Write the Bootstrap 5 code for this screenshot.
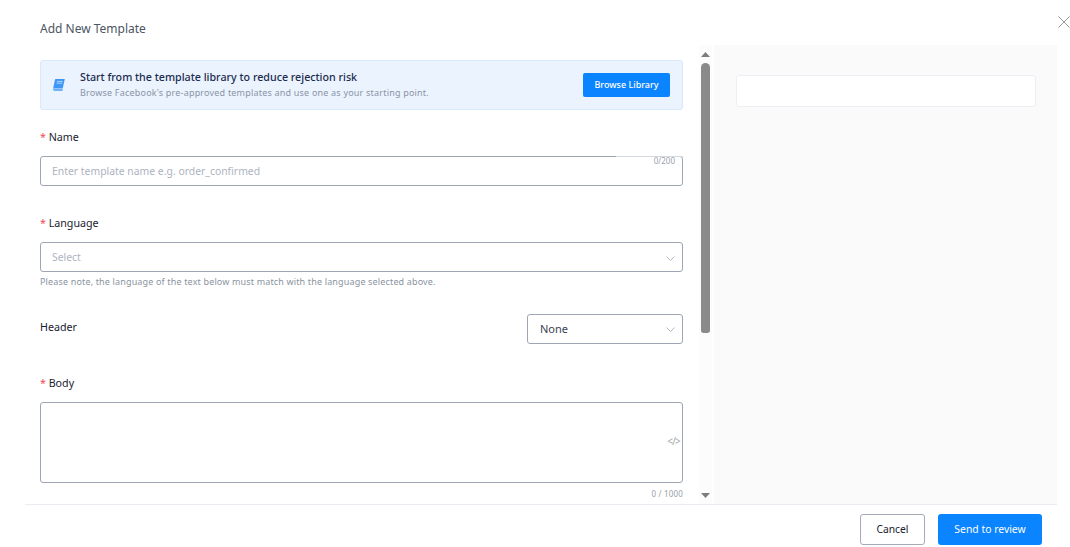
<!DOCTYPE html>
<html lang="en">
<head>
    <meta charset="UTF-8">
    <meta name="viewport" content="width=device-width, initial-scale=1.0">
    <title>Add New Template</title>
    <link href="https://cdn.jsdelivr.net/npm/bootstrap@5.3.0/dist/css/bootstrap.min.css" rel="stylesheet">
    <style>
        html, body { height: 100%; overflow: hidden; }
        body { font-family: "Noto Sans", "Open Sans", sans-serif; font-size: 12px; color: #1a2230; background: #fff; }
        .page { height: 547px; width: 1070px; padding-left: 25px; }
        .title-bar { height: 45px; width: 1032px; padding: 20px 0 0 15px; font-size: 12px; line-height: 18px; color: #4b5563; position: relative; }
        .close-x { position: absolute; left: 1033px; top: 16px; width: 12px; height: 12px; }
        .content { height: 459px; width: 1032px; }
        .left-pane { width: 687px; flex: none; padding: 15px 0 0 15px; }
        .form-col { width: 643px; flex: none; }
        .scroll { width: 13px; flex: none; margin-left: 16px; background: #fcfcfc; }
        .scroll-arrow { height: 18px; }
        .thumb { width: 9px; height: 270px; background: #8a8a8a; border-radius: 5px 5px 3px 3px; margin: 0 auto; }
        .right-pane { width: 343px; flex: none; margin-left: 2px; background: #fafafa; padding: 30px 21px 0 22px; }
        .preview-box { height: 32px; background: #fff; border: 1px solid #eeeff5; border-radius: 3px; }
        .tip { height: 50px; background: #eaf3fe; border: 1px solid #d8e9fd; border-radius: 3px; padding: 0 12px 0 11px; }
        .tip-text { margin-left: 14px; }
        .tip-title { font-size: 10.7px; line-height: 15px; font-weight: 500; color: #1b2b4d; }
        .tip-sub { font-size: 9px; line-height: 14px; margin-top: 1px; color: #8a94a6; letter-spacing: .2px; }
        .btn-browse { background: #0a84ff; color: #fff; font-size: 9px; font-weight: 500; height: 24px; width: 87px; padding: 0; border: 0; border-radius: 2px; }
        .field-label { font-size: 10.7px; line-height: 16px; color: #1a2230; margin: 0; }
        .req { color: #ef4a55; }
        .field { height: 30px; border: 1px solid #9ea6b4; border-radius: 3px; padding: 2px 7px 0 11px; font-size: 10.4px; color: #adb3bf; background: #fff; }
        .field-value { color: #3a4250; font-size: 11px; padding: 0 7px 0 12px; }
        .notch { position: absolute; right: -1px; top: -1px; width: 67px; height: 1px; background: #d3d7de; }
        .count-top { position: absolute; right: 7px; top: -1px; font-size: 8px; line-height: 10px; color: #9aa1ad; }
        .help { font-size: 9px; line-height: 12px; color: #8a94a0; letter-spacing: .155px; margin-top: 4px; }
        .body-box { height: 81px; border: 1px solid #9ea6b4; border-radius: 3px; }
        .code-tag { position: absolute; right: 2px; top: 31px; font-size: 10px; line-height: 14px; letter-spacing: -.8px; color: #a8a8a8; }
        .count-bottom { font-size: 8px; line-height: 10px; color: #9aa1ad; letter-spacing: .2px; margin-top: 6px; }
        .footer-bar { width: 1032px; height: 43px; border-top: 1px solid #eaecf2; padding: 9px 15px 0 0; }
        .btn-cancel { width: 65px; height: 31px; padding: 0; font-size: 10.3px; color: #1a2230; background: #fff; border: 1px solid #a4abb6; border-radius: 3px; }
        .btn-send { width: 104px; height: 31px; padding: 0; font-size: 10.4px; color: #fff; background: #0a84ff; border: 0; border-radius: 3px; }
    </style>
</head>
<body>
    <div class="page">
        <div class="title-bar">
            Add New Template
            <svg class="close-x" viewBox="0 0 12 12"><path d="M.5.5l11 11M11.5.5l-11 11" stroke="#9b9b9b" stroke-width="1" fill="none"/></svg>
        </div>

        <div class="content d-flex">
            <div class="left-pane d-flex">
                <div class="form-col">
                    <div class="tip d-flex align-items-center">
                        <svg width="14" height="14" viewBox="0 0 14 14" class="flex-shrink-0">
                            <path d="M3.6 1h9.2l-2.1 9.4H2.2C1.4 10.4 1 11 .9 11.5L3 1.6c.1-.4.3-.6.6-.6z" fill="#3d97f7"/>
                            <path d="M1 11.8c0-.6.5-.9 1.1-.9h8.7l-.3 2H2.2c-.8 0-1.2-.5-1.2-1.1z" fill="#6fb2fa"/>
                            <path d="M5 3.4h5.6M4.6 5.2h5.6" stroke="#cfe5fd" stroke-width=".8"/>
                        </svg>
                        <div class="tip-text flex-grow-1">
                            <div class="tip-title">Start from the template library to reduce rejection risk</div>
                            <div class="tip-sub">Browse Facebook's pre-approved templates and use one as your starting point.</div>
                        </div>
                        <button class="btn btn-browse" type="button">Browse Library</button>
                    </div>

                    <p class="field-label" style="margin-top:19px"><span class="req">*</span> Name</p>
                    <div class="field position-relative d-flex align-items-center" style="margin-top:11px">
                        Enter template name e.g. order_confirmed
                        <span class="notch"></span>
                        <span class="count-top">0/200</span>
                    </div>

                    <p class="field-label" style="margin-top:29px"><span class="req">*</span> Language</p>
                    <div class="field d-flex align-items-center justify-content-between" style="margin-top:11px">
                        Select
                        <svg width="9" height="5" viewBox="0 0 9 5"><path d="M.5.5l4 4 4-4" stroke="#b4b8c0" fill="none"/></svg>
                    </div>
                    <div class="help">Please note, the language of the text below must match with the language selected above.</div>

                    <div class="d-flex justify-content-between" style="margin-top:26px">
                        <p class="field-label" style="margin-top:5px">Header</p>
                        <div class="field field-value d-flex align-items-center justify-content-between" style="width:156px">
                            None
                            <svg width="9" height="5" viewBox="0 0 9 5"><path d="M.5.5l4 4 4-4" stroke="#b4b8c0" fill="none"/></svg>
                        </div>
                    </div>

                    <p class="field-label" style="margin-top:31px"><span class="req">*</span> Body</p>
                    <div class="body-box position-relative" style="margin-top:11px">
                        <span class="code-tag">&lt;/&gt;</span>
                    </div>
                    <div class="count-bottom text-end">0 / 1000</div>
                </div>

                <div class="scroll d-flex flex-column align-items-center" style="margin-top:-15px">
                    <div class="scroll-arrow d-flex align-items-center justify-content-center">
                        <svg width="9" height="5" viewBox="0 0 9 5"><path d="M4.5 0L9 5H0z" fill="#7d7d7d"/></svg>
                    </div>
                    <div class="thumb"></div>
                    <div class="flex-grow-1"></div>
                    <div class="scroll-arrow d-flex align-items-center justify-content-center">
                        <svg width="9" height="5" viewBox="0 0 9 5"><path d="M4.5 5L9 0H0z" fill="#7d7d7d"/></svg>
                    </div>
                </div>
            </div>

            <div class="right-pane">
                <div class="preview-box"></div>
            </div>
        </div>

        <div class="footer-bar d-flex justify-content-end" style="column-gap:13px">
            <button class="btn btn-cancel" type="button">Cancel</button>
            <button class="btn btn-send" type="button">Send to review</button>
        </div>
    </div>

    <script src="https://cdn.jsdelivr.net/npm/bootstrap@5.3.0/dist/js/bootstrap.bundle.min.js"></script>
</body>
</html>
